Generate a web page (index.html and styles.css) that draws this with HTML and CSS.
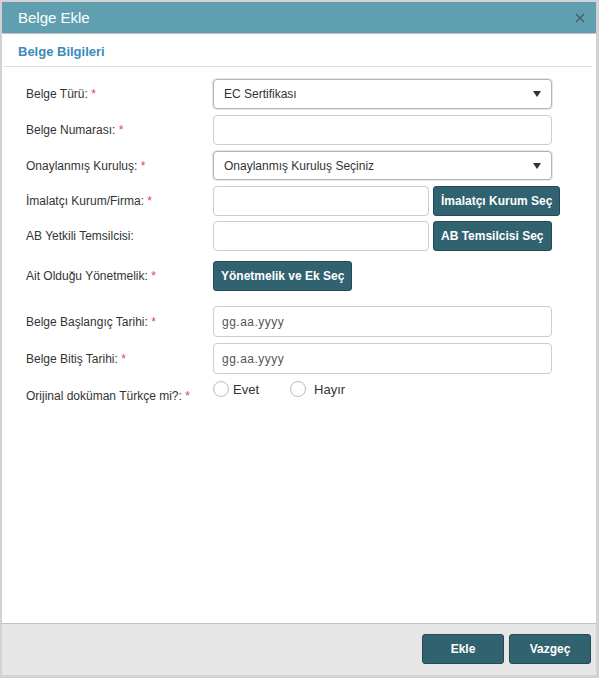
FILE: index.html
```html
<!DOCTYPE html>
<html lang="tr">
<head>
<meta charset="utf-8">
<title>Belge Ekle</title>
<link rel="stylesheet" href="styles.css">
</head>
<body>
<div class="dialog">
  <div class="titlebar">
    <span class="title">Belge Ekle</span>
    <svg class="close" width="10" height="10" viewBox="0 0 10 10"><path d="M1 1L9 9M9 1L1 9" stroke="#4a5a60" stroke-width="1.2"/></svg>
  </div>
  <div class="content">
    <div class="section-title">Belge Bilgileri</div>
    <div class="form">
      <div class="row">
        <div class="label">Belge Türü: <span class="req">*</span></div>
        <div class="select"><span>EC Sertifikası</span><svg width="8" height="6" viewBox="0 0 8 6"><polygon points="0,0 8,0 4,6" fill="#333"/></svg></div>
      </div>
      <div class="row">
        <div class="label">Belge Numarası: <span class="req">*</span></div>
        <div class="input"></div>
      </div>
      <div class="row">
        <div class="label">Onaylanmış Kuruluş: <span class="req">*</span></div>
        <div class="select short"><span>Onaylanmış Kuruluş Seçiniz</span><svg width="8" height="6" viewBox="0 0 8 6"><polygon points="0,0 8,0 4,6" fill="#333"/></svg></div>
      </div>
      <div class="row">
        <div class="label">İmalatçı Kurum/Firma: <span class="req">*</span></div>
        <div class="input half"></div>
        <button class="btn">İmalatçı Kurum Seç</button>
      </div>
      <div class="row tight">
        <div class="label">AB Yetkili Temsilcisi:</div>
        <div class="input half"></div>
        <button class="btn">AB Temsilcisi Seç</button>
      </div>
      <div class="row wide">
        <div class="label">Ait Olduğu Yönetmelik: <span class="req">*</span></div>
        <button class="btn">Yönetmelik ve Ek Seç</button>
      </div>
      <div class="row wider">
        <div class="label">Belge Başlangıç Tarihi: <span class="req">*</span></div>
        <div class="input date">gg.aa.yyyy</div>
      </div>
      <div class="row">
        <div class="label">Belge Bitiş Tarihi: <span class="req">*</span></div>
        <div class="input date">gg.aa.yyyy</div>
      </div>
      <div class="row radio-row">
        <div class="label">Orijinal doküman Türkçe mi?: <span class="req">*</span></div>
        <div class="radios">
          <span class="radio"><span class="circle"></span>Evet</span>
          <span class="radio"><span class="circle"></span>Hayır</span>
        </div>
      </div>
    </div>
  </div>
  <div class="footer">
    <button class="btn fbtn">Ekle</button>
    <button class="btn fbtn">Vazgeç</button>
  </div>
</div>
</body>
</html>
```
FILE: styles.css
```css
html, body {
  margin: 0;
  padding: 0;
}
body {
  background: #d2d2d2;
  font-family: "Liberation Sans", Arial, sans-serif;
  color: #333;
  font-size: 12px;
  height: 678px;
  overflow: hidden;
}
.dialog {
  margin: 2px 3px 0 2px;
  height: 673px;
  background: #fff;
  display: flex;
  flex-direction: column;
}
.titlebar {
  height: 31px;
  background: #609fb0;
  border-bottom: 1px solid #c4c4c4;
  display: flex;
  align-items: center;
  justify-content: space-between;
  padding: 0 11px 0 16px;
  color: #fff;
  font-size: 15px;
}
.content {
  flex: 1;
}
.section-title {
  margin: 0 4px 0 2px;
  padding: 10px 0 0 14px;
  height: 22px;
  border-bottom: 1px solid #dddddd;
  color: #3b8bba;
  font-weight: bold;
  font-size: 13px;
  line-height: 16px;
}
.form {
  padding: 12px 0 0 24px;
  display: flex;
  flex-direction: column;
}
.row {
  display: flex;
  align-items: center;
  margin-bottom: 6px;
}
.row.tight {
  margin-top: -1px;
}
.row.wide {
  margin-top: 4px;
}
.row.wider {
  margin-top: 9px;
}
.label {
  width: 187px;
  flex: none;
  font-size: 12px;
}
.req {
  color: #e5444c;
}
.input, .select {
  box-sizing: border-box;
  width: 339px;
  height: 30px;
  border: 1px solid #cccccc;
  border-radius: 4px;
  background: #fff;
}
.select {
  border: 1px solid #b4b4b4;
  box-shadow: 0 0 0 1px #e6e6e6;
  display: flex;
  align-items: center;
  justify-content: space-between;
  padding: 0 10px 0 10px;
  color: #333;
  font-size: 12px;
}
.select.short {
  height: 29px;
}
.input.half {
  width: 216px;
  margin-right: 4px;
}
.input.date {
  height: 31px;
  display: flex;
  align-items: center;
  padding-left: 8px;
  color: #555;
  letter-spacing: 0.5px;
  font-size: 12px;
}
.btn {
  box-sizing: border-box;
  height: 30px;
  padding: 0 7px;
  background: #30626f;
  border: 1px solid #244c57;
  border-radius: 3px;
  color: #fff;
  font-family: "Liberation Sans", Arial, sans-serif;
  font-weight: bold;
  font-size: 12px;
}
.radio-row {
  align-items: flex-start;
  margin-top: 1px;
}
.radio-row .label {
  padding-top: 8px;
}
.radios {
  display: flex;
  font-size: 13px;
  color: #333;
}
.radio {
  display: flex;
  align-items: center;
  height: 16px;
}
.radio + .radio {
  margin-left: 31px;
}
.circle {
  box-sizing: border-box;
  width: 16px;
  height: 16px;
  border: 1px solid #bdbdbd;
  border-radius: 50%;
  background: #fff;
  margin-right: 4px;
}
.radio + .radio .circle {
  margin-right: 8px;
}
.footer {
  border-top: 1px solid #c3c3c3;
  background: #e6e6e6;
  display: flex;
  justify-content: flex-end;
  align-items: flex-start;
  padding: 10px 5px 0 0;
  box-sizing: border-box;
  height: 52px;
  gap: 5px;
}
.fbtn {
  width: 82px;
  height: 30px;
}
```
